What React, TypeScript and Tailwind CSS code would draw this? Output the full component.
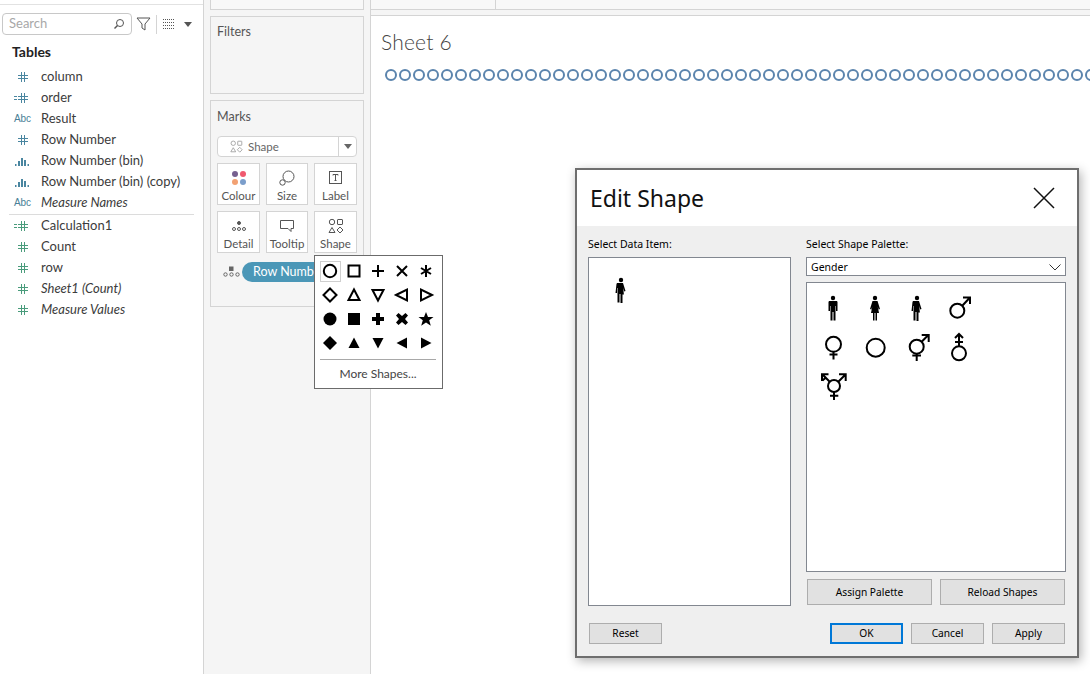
import type { ReactNode } from "react";

const hashBlue = "#4a86a0";
const hashGreen = "#4a9c7c";

function Hash({ color, eq }: { color: string; eq?: boolean }) {
  return (
    <svg width="24" height="12" viewBox="0 0 24 12" fill="none" stroke={color} strokeWidth="1">
      <path d="M8 4.500h10M8 7.500h10M11.500 1v10M14.500 1v10" />
      {eq && <path d="M4 4.500h3M4 7.500h3" />}
    </svg>
  );
}

function Bars() {
  return (
    <svg width="24" height="12" viewBox="0 0 24 12" fill={hashBlue}>
      <rect x="5" y="9" width="1.500" height="2" />
      <rect x="8" y="6" width="2" height="5" />
      <rect x="11" y="3" width="2" height="8" />
      <rect x="14" y="5" width="2" height="6" />
      <rect x="17.500" y="9" width="1.500" height="2" />
    </svg>
  );
}

function Abc() {
  return <span className="ml-px w-6 text-center text-[10px] text-[#4a7f97] font-['Liberation_Sans',sans-serif]">Abc</span>;
}

const fieldsTop: [string, ReactNode, boolean?][] = [
  ["column", <Hash color={hashBlue} />],
  ["order", <Hash color={hashBlue} eq />],
  ["Result", <Abc />],
  ["Row Number", <Hash color={hashBlue} />],
  ["Row Number (bin)", <Bars />],
  ["Row Number (bin) (copy)", <Bars />],
  ["Measure Names", <Abc />, true],
];

const fieldsBottom: [string, ReactNode, boolean?][] = [
  ["Calculation1", <Hash color={hashGreen} eq />],
  ["Count", <Hash color={hashGreen} />],
  ["row", <Hash color={hashGreen} />],
  ["Sheet1 (Count)", <Hash color={hashGreen} />, true],
  ["Measure Values", <Hash color={hashGreen} />, true],
];

function FieldRow({ name, icon, italic }: { name: string; icon: ReactNode; italic?: boolean }) {
  return (
    <div className="flex h-[21px] items-center pl-[10px]">
      <span className="flex w-6 justify-center">{icon}</span>
      <span className={`ml-[7px] text-[13px] text-[#3c3c3c] ${italic ? "italic" : ""}`}>{name}</span>
    </div>
  );
}

function MarkButton({ label, children }: { label: string; children: ReactNode }) {
  return (
    <div className="flex h-[42px] flex-col items-center justify-between border border-[#d4d4d4] bg-white pt-[4px] pb-[1px]">
      <div className="flex h-5 items-center justify-center">{children}</div>
      <span className="text-[11.5px] leading-[14px] text-[#555]">{label}</span>
    </div>
  );
}

function ShapesGlyph({ size = 16, color = "#555" }: { size?: number; color?: string }) {
  return (
    <svg width={size} height={size} viewBox="0 0 16 16" fill="none" stroke={color} strokeWidth="1">
      <circle cx="4" cy="4" r="2.700" />
      <rect x="9.500" y="1.500" width="5" height="5" rx="0.500" />
      <path d="M4 9.500l3 5H1z" />
      <path d="M12 9l3 3-3 3-3-3z" />
    </svg>
  );
}

const popupShapes: ReactNode[] = [
  <circle cx="10" cy="10" r="6.200" fill="none" strokeWidth="2" />,
  <rect x="4.500" y="4.500" width="11" height="11" fill="none" strokeWidth="2" />,
  <path d="M10 4v12M4 10h12" fill="none" strokeWidth="2" />,
  <path d="M5 5l10 10M15 5L5 15" fill="none" strokeWidth="2" />,
  <path d="M10 4v12M5 7l10 6M15 7L5 13" fill="none" strokeWidth="2" />,
  <path d="M10 3.500l6.500 6.500-6.500 6.500L3.500 10z" fill="none" strokeWidth="2" />,
  <path d="M10 4.500l5.500 10.500h-11z" fill="none" strokeWidth="2" />,
  <path d="M10 15.500l5.500-10.500h-11z" fill="none" strokeWidth="2" />,
  <path d="M4 10l11-5.500v11z" fill="none" strokeWidth="2" />,
  <path d="M16 10L5 4.500v11z" fill="none" strokeWidth="2" />,
  <circle cx="10" cy="10" r="6.500" />,
  <rect x="4" y="4" width="12" height="12" />,
  <path d="M8 4h4v4h4v4h-4v4H8v-4H4V8h4z" />,
  <path d="M6.500 4L10 7l3.500-3L16 6.500 13 10l3 3.500-2.500 2.500L10 13l-3.500 3L4 13.500 7 10 4 6.500z" />,
  <path d="M10 3l2 5h5.500l-4.300 3.300 1.600 5.500-4.800-3.300-4.800 3.300 1.600-5.500L2.500 8H8z" />,
  <path d="M10 3l7 7-7 7-7-7z" />,
  <path d="M10 4.500l5.500 10.500h-11z" />,
  <path d="M10 15.500l5.500-10.500h-11z" />,
  <path d="M4.500 10L15 4.500v11z" />,
  <path d="M15.500 10L5 4.500v11z" />,
];

function Man({ dress, half }: { dress?: boolean; half?: boolean }) {
  return (
    <svg width="36" height="36" viewBox="0 0 36 36" fill="#000">
      <circle cx="18" cy="8" r="2.200" />
      {dress ? (
        <path d="M15.500 11h5l2.500 8-1.300.5-1-3 1.300 6.500h-2v7.500h-1.500V23h-1v7.500H16V23h-2l1.300-6.500-1 3-1.300-.5z" />
      ) : half ? (
        <path d="M13.500 12l.5-1h6l2.500 8-1.300.5-1-3.500.7 6.500h-1.400v8.500h-2V22h-1v8.500h-2V16h-.5v5h-1.500z" />
      ) : (
        <path d="M13.500 12l.5-1h8l.5 1v9H21v-5h-.5v14.500h-2V22h-1v8.500h-2V16H15v5h-1.500z" />
      )}
    </svg>
  );
}

function Gender({ children }: { children: ReactNode }) {
  return (
    <svg width="36" height="36" viewBox="0 0 36 36" fill="none" stroke="#000" strokeWidth="2">
      {children}
    </svg>
  );
}

function Field({ children }: { children: ReactNode }) {
  return <div className="flex h-[39px] w-[42px] items-center justify-center">{children}</div>;
}

function DialogButton({ label, primary, wide }: { label: string; primary?: boolean; wide?: boolean }) {
  return (
    <div
      className={`flex items-center justify-center bg-[#e1e1e1] text-[10.2px] text-black ${
        wide ? "h-[26px] w-[125px] pt-px" : "h-[21px] w-[73px]"
      } ${primary ? "border-2 border-[#0078d7]" : "border border-[#adadad]"}`}
    >
      {label}
    </div>
  );
}

export default function App() {
  const dots = Array.from({ length: 52 });
  return (
    <div className="relative flex h-[674px] w-[1090px] overflow-hidden bg-white font-['Lato',sans-serif]">
      {/* Data pane */}
      <div className="w-[204px] shrink-0 border-r border-[#d4d4d4] bg-white">
        <div className="h-[5px] border-b border-[#e2e2e2]" />
        <div className="mt-2 flex h-[22px] items-center pl-[2px]">
          <div className="flex h-[22px] w-[130px] items-center justify-between rounded-sm border border-[#c8c8c8] px-[6px]">
            <span className="text-[13px] text-[#a8a8a8]">Search</span>
            <svg width="12" height="12" viewBox="0 0 12 12" fill="none" stroke="#555" strokeWidth="1">
              <circle cx="7" cy="5" r="3.500" />
              <path d="M4.500 7.500L1.500 10.500" strokeWidth="1.500" />
            </svg>
          </div>
          <svg className="ml-[4px]" width="15" height="14" viewBox="0 0 15 14" fill="none" stroke="#555" strokeWidth="1">
            <path d="M1 1h13L9 7v6l-3-2V7z" />
          </svg>
          <div className="ml-[5px] h-[19px] w-px bg-[#d4d4d4]" />
          <svg className="ml-[6px]" width="12" height="10" viewBox="0 0 12 10" fill="none" stroke="#555" strokeDasharray="1 1">
            <path d="M0 .5h12M0 3.500h12M0 6.500h12M0 9.500h12" />
          </svg>
          <svg className="ml-[9px]" width="8" height="5" viewBox="0 0 8 5" fill="#555">
            <path d="M0 0h8L4 5z" />
          </svg>
        </div>
        <div className="mt-[7px] pl-3 text-[14px] leading-[20px] font-bold text-[#222]">Tables</div>
        <div className="mt-[4px]">
          {fieldsTop.map(([name, icon, italic]) => (
            <FieldRow key={name} name={name} icon={icon} italic={italic} />
          ))}
        </div>
        <div className="mx-[9px] mt-[1px] h-px bg-[#dcdcdc]" />
        <div>
          {fieldsBottom.map(([name, icon, italic]) => (
            <FieldRow key={name} name={name} icon={icon} italic={italic} />
          ))}
        </div>
      </div>

      {/* Shelves */}
      <div className="w-[167px] shrink-0 border-r border-[#d4d4d4] bg-[#f5f5f5] pl-[6px]">
        <div className="h-[10px] w-[154px] border border-t-0 border-[#d4d4d4] bg-[#f8f8f8]" />
        <div className="mt-[6px] h-[78px] w-[154px] border border-[#d4d4d4] bg-[#f5f5f5] px-[6px] pt-[6px] text-[12.5px] text-[#555]">
          Filters
        </div>
        <div className="mt-[6px] h-[207px] w-[154px] border border-[#d4d4d4] bg-[#f5f5f5] px-[6px] pt-[8px]">
          <div className="text-[12.5px] leading-[16px] text-[#555]">Marks</div>
          <div className="mt-[11px] flex h-[21px] w-[140px] items-center rounded-sm border border-[#d4d4d4] bg-white">
            <div className="flex flex-1 items-center pl-[12px]">
              <ShapesGlyph size={13} color="#999" />
              <span className="ml-[5px] text-[11.5px] text-[#666]">Shape</span>
            </div>
            <div className="flex h-full w-[18px] items-center justify-center border-l border-[#d4d4d4]">
              <svg width="8" height="5" viewBox="0 0 8 5" fill="#666">
                <path d="M0 0h8L4 5z" />
              </svg>
            </div>
          </div>
          <div className="mt-[6px] grid w-[140px] grid-cols-[43px_42px_43px] gap-x-[6px] gap-y-[6px]">
            <MarkButton label="Colour">
              <svg width="16" height="16" viewBox="0 0 16 16">
                <circle cx="4" cy="4" r="3" fill="#76608f" />
                <circle cx="12" cy="4" r="3" fill="#f0596f" />
                <circle cx="4" cy="12" r="3" fill="#f2a173" />
                <circle cx="12" cy="12" r="3" fill="#7b9ecb" />
              </svg>
            </MarkButton>
            <MarkButton label="Size">
              <svg width="16" height="16" viewBox="0 0 16 16" fill="none" stroke="#555">
                <circle cx="9.500" cy="6.500" r="5.500" />
                <circle cx="3.500" cy="12.500" r="2.700" fill="#fff" />
              </svg>
            </MarkButton>
            <MarkButton label="Label">
              <svg width="14" height="14" viewBox="0 0 14 14" fill="none" stroke="#555">
                <rect x=".5" y=".5" width="12" height="12" />
                <path d="M4 4.500V3.500h5v1M6.500 3.500v6M5.500 9.500h2" />
              </svg>
            </MarkButton>
            <MarkButton label="Detail">
              <svg width="16" height="14" viewBox="0 0 16 14" fill="none" stroke="#555">
                <circle cx="8" cy="4" r="1.500" fill="#555" />
                <circle cx="3" cy="10" r="1.500" />
                <circle cx="8" cy="10" r="1.500" />
                <circle cx="13" cy="10" r="1.500" />
              </svg>
            </MarkButton>
            <MarkButton label="Tooltip">
              <svg width="16" height="14" viewBox="0 0 16 14" fill="none" stroke="#555">
                <path d="M1.500 1.500h13v8h-2.500v3l-3-3H1.500z" />
              </svg>
            </MarkButton>
            <MarkButton label="Shape">
              <ShapesGlyph />
            </MarkButton>
          </div>
          <div className="mt-[9px] flex items-center pl-[6px]">
            <svg width="18" height="12" viewBox="0 0 18 12" fill="none" stroke="#666">
              <rect x="6.500" y="1" width="3.500" height="3.500" fill="#666" />
              <circle cx="2.500" cy="8.500" r="1.700" />
              <circle cx="8.500" cy="8.500" r="1.700" />
              <circle cx="14.500" cy="8.500" r="1.700" />
            </svg>
            <div className="ml-[1px] flex h-5 w-[96px] items-center overflow-hidden rounded-l-full bg-[#4b97b7] pl-[11px] text-[12.500px] whitespace-nowrap text-white">
              Row Number
            </div>
          </div>
        </div>
      </div>

      {/* Worksheet */}
      <div className="flex-1 bg-[#f5f5f5]">
        <div className="flex h-[10px] border-b border-[#d4d4d4] bg-[#f8f8f8]">
          <div className="w-[125px] border-r border-[#d4d4d4]" />
        </div>
        <div className="mt-[5px] h-[660px] overflow-hidden border-t border-[#d4d4d4] bg-white pl-[14px] pt-[13px]">
          <div className="-ml-[4px] text-[21px] leading-[26px] font-light tracking-[0.2px] text-[#444]">Sheet 6</div>
          <div className="mt-[14px] flex gap-[2px]">
            {dots.map((_, i) => (
              <span key={i} className="size-3 shrink-0 rounded-full border-2 border-[#5b84ad]" />
            ))}
          </div>
        </div>
      </div>

      {/* Shape popup */}
      <div className="absolute top-[255px] left-[314px] h-[134px] w-[129px] border border-[#6b6b6b] bg-white pt-[3px] pl-[3px]">
        <div className="grid grid-cols-[repeat(5,24px)]">
          {popupShapes.map((shape, i) => (
            <div key={i} className="flex h-[24px] w-[24px] items-center justify-center">
              <div className={`flex size-[21px] items-center justify-center ${i === 0 ? "border border-[#cfcfcf]" : ""}`}>
                <svg className="shrink-0" width="20" height="20" viewBox="0 0 20 20" fill="#000" stroke="#000" strokeWidth="0">
                  {shape}
                </svg>
              </div>
            </div>
          ))}
        </div>
        <div className="mt-[4px] ml-[2px] h-px w-[116px] bg-[#a8a8a8]" />
        <div className="mt-[6px] ml-[2px] w-[116px] text-center text-[12px] leading-[15px] text-[#444]">More Shapes...</div>
      </div>

      {/* Edit Shape dialog */}
      <div className="absolute top-[168px] left-[575px] w-[504px] border-2 border-[#6e6e6e] bg-[#efefef] shadow-[2px_3px_10px_rgba(0,0,0,0.3)] font-['Noto_Sans',sans-serif]">
        <div className="flex h-[56px] items-center justify-between bg-white pr-[22px] pl-[13px]">
          <span className="text-[23px] text-[#111]">Edit Shape</span>
          <svg width="22" height="22" viewBox="0 0 22 22" fill="none" stroke="#111" strokeWidth="1.500">
            <path d="M1 1l20 20M21 1L1 21" />
          </svg>
        </div>
        <div className="px-[11px] pt-[11px] pb-[12px]">
          <div className="flex gap-[15px]">
            <div className="w-[203px]">
              <div className="h-[20px] text-[10.5px] leading-[14px] text-black">Select Data Item:</div>
              <div className="h-[349px] border border-[#828790] bg-white pt-[14px] pl-[14px]">
                <Man half />
              </div>
            </div>
            <div className="w-[260px]">
              <div className="h-[20px] text-[10.5px] leading-[14px] text-black">Select Shape Palette:</div>
              <div className="flex h-[19px] items-center justify-between border border-[#828790] bg-white px-[4px] pt-[2px] text-[10.5px] text-black">
                Gender
                <svg width="12" height="7" viewBox="0 0 12 7" fill="none" stroke="#333">
                  <path d="M.5.500L6 6 11.500.500" />
                </svg>
              </div>
              <div className="mt-[6px] h-[290px] border border-[#828790] bg-white pt-[5px] pl-[5px]">
                <div className="grid grid-cols-[repeat(4,42px)]">
                  <Field><Man /></Field>
                  <Field><Man dress /></Field>
                  <Field><Man half /></Field>
                  <Field>
                    <Gender>
                      <circle cx="16.300" cy="20.700" r="7" />
                      <path d="M21.500 15.500L28.500 8M22 7.500h7V14" />
                    </Gender>
                  </Field>
                  <Field>
                    <Gender>
                      <circle cx="18.500" cy="15.300" r="7.500" />
                      <path d="M18.500 22.800V30.500M14.500 25.500h8" />
                    </Gender>
                  </Field>
                  <Field>
                    <Gender>
                      <circle cx="18.700" cy="18.700" r="9" />
                    </Gender>
                  </Field>
                  <Field>
                    <Gender>
                      <circle cx="17.700" cy="17.700" r="7" />
                      <path d="M22.700 12.700L28.800 6.500M22.700 6h7v7M17.700 24.700V32M13.300 26.500h8.700" />
                    </Gender>
                  </Field>
                  <Field>
                    <Gender>
                      <circle cx="18" cy="24.300" r="7" />
                      <path d="M18 17.300V5M14 9l4-4 4 4M14 13h8" />
                    </Gender>
                  </Field>
                  <Field>
                    <Gender>
                      <circle cx="19" cy="18" r="6" />
                      <path d="M23.300 13.700L30 7M24 6.300h6.700V13M14.700 13.700L8 7M7 13V6.300h6.500M7.500 12.500l4-3.500M19 24v8M15 27.700h8.300" />
                    </Gender>
                  </Field>
                </div>
              </div>
              <div className="mt-[7px] flex justify-between px-px">
                <DialogButton label="Assign Palette" wide />
                <DialogButton label="Reload Shapes" wide />
              </div>
            </div>
          </div>
          <div className="mt-[17px] flex items-center justify-between px-px">
            <DialogButton label="Reset" />
            <div className="flex gap-2">
              <DialogButton label="OK" primary />
              <DialogButton label="Cancel" />
              <DialogButton label="Apply" />
            </div>
          </div>
        </div>
      </div>
    </div>
  );
}
